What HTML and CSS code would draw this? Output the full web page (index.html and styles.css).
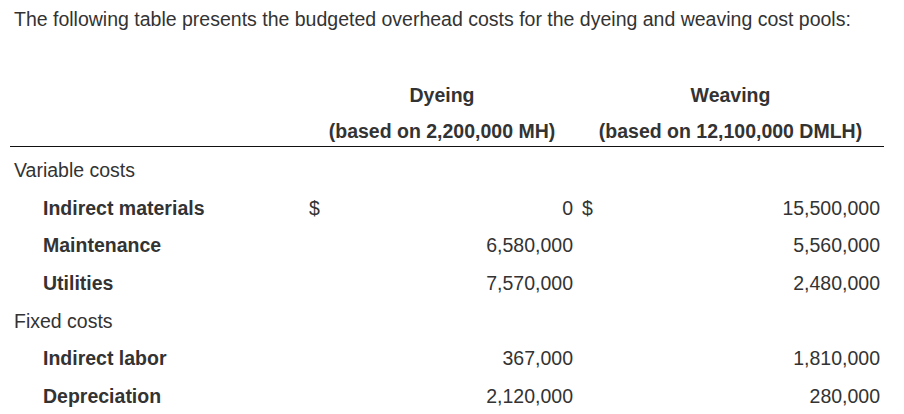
FILE: index.html
```html
<!DOCTYPE html>
<html>
<head>
<meta charset="utf-8">
<link rel="stylesheet" href="styles.css">
</head>
<body>
<div class="page">
  <p class="intro">The following table presents the budgeted overhead costs for the dyeing and weaving cost pools:</p>
  <table class="costs">
    <colgroup>
      <col class="c-label">
      <col class="c-cur1">
      <col class="c-val1">
      <col class="c-cur2">
      <col class="c-val2">
    </colgroup>
    <thead>
      <tr>
        <th></th>
        <th colspan="2" class="h-dye">Dyeing</th>
        <th colspan="2" class="h-weave">Weaving</th>
      </tr>
      <tr class="h-base">
        <th></th>
        <th colspan="2" class="h-dye">(based on 2,200,000 MH)</th>
        <th colspan="2" class="h-weave">(based on 12,100,000 DMLH)</th>
      </tr>
    </thead>
    <tbody>
      <tr class="first">
        <td class="group">Variable costs</td>
        <td></td><td></td><td></td><td></td>
      </tr>
      <tr>
        <td class="item">Indirect materials</td>
        <td class="cur1">$</td>
        <td class="num">0</td>
        <td class="cur2">$</td>
        <td class="num">15,500,000</td>
      </tr>
      <tr>
        <td class="item">Maintenance</td>
        <td></td>
        <td class="num">6,580,000</td>
        <td></td>
        <td class="num">5,560,000</td>
      </tr>
      <tr>
        <td class="item">Utilities</td>
        <td></td>
        <td class="num">7,570,000</td>
        <td></td>
        <td class="num">2,480,000</td>
      </tr>
      <tr>
        <td class="group">Fixed costs</td>
        <td></td><td></td><td></td><td></td>
      </tr>
      <tr>
        <td class="item">Indirect labor</td>
        <td></td>
        <td class="num">367,000</td>
        <td></td>
        <td class="num">1,810,000</td>
      </tr>
      <tr>
        <td class="item">Depreciation</td>
        <td></td>
        <td class="num">2,120,000</td>
        <td></td>
        <td class="num">280,000</td>
      </tr>
    </tbody>
  </table>
</div>
</body>
</html>
```

FILE: styles.css
```css
html, body {
  margin: 0;
  padding: 0;
  background: #fff;
}

body {
  font-family: "Liberation Sans", Arial, sans-serif;
  font-size: 19.5px;
  color: #333;
}

.page {
  padding-top: 8px;
}

.intro {
  margin: 0;
  padding-left: 14px;
  line-height: 22px;
}

.costs {
  margin: 44px 0 0 10px;
  width: 874px;
  border-collapse: collapse;
  table-layout: fixed;
}

.c-label { width: 291px; }
.c-cur1 { width: 30px; }
.c-val1 { width: 246px; }
.c-cur2 { width: 24px; }
.c-val2 { width: 283px; }

.costs th {
  font-weight: bold;
  line-height: 22px;
  padding: 10px 4px 4px 4px;
  text-align: center;
  white-space: nowrap;
}

.costs th.h-dye {
  padding-left: 10px;
}

.h-base th {
  border-bottom: 1px solid #111;
}

.costs td {
  line-height: 22px;
  padding: 7.8px 4px;
  white-space: nowrap;
}

.costs tr.first td {
  padding-top: 12.3px;
}

.group {
  font-weight: normal;
}

.item {
  font-weight: bold;
  padding-left: 33px !important;
}

.cur1 {
  padding-left: 8px !important;
}

.cur2 {
  padding-left: 5px !important;
}

.num {
  text-align: right;
}
```
